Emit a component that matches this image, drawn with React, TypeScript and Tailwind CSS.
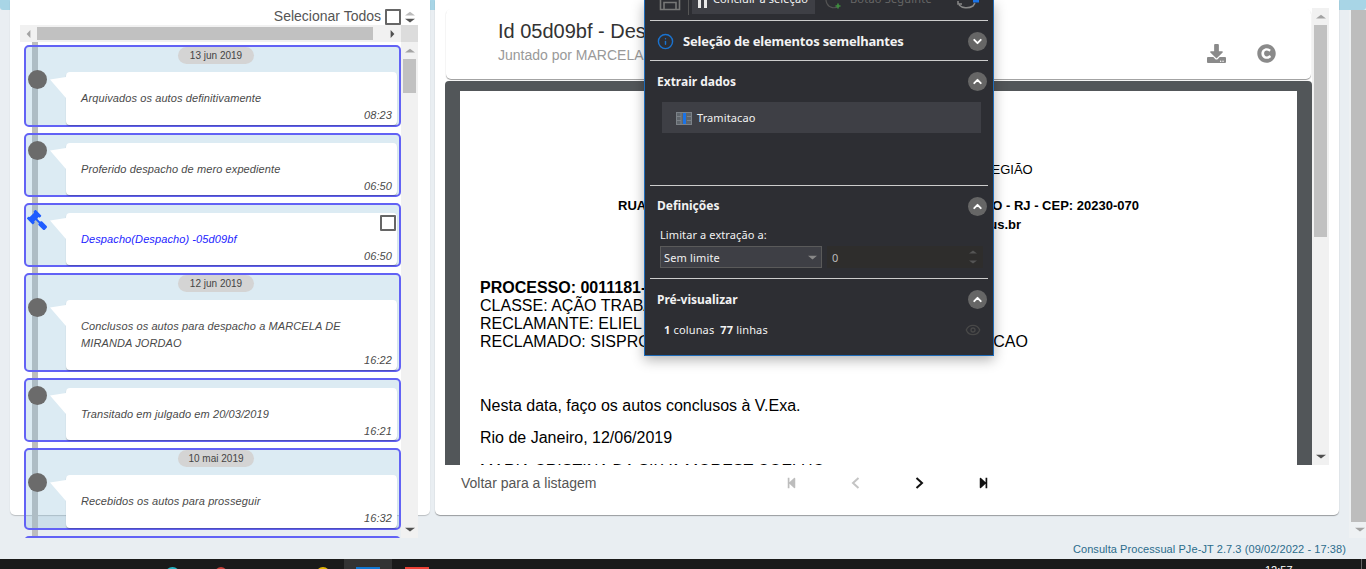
import { ChevronDown, ChevronUp, Eye, Info } from 'lucide-react'
import { FaCopyright, FaDownload, FaGavel, FaStepBackward, FaStepForward } from 'react-icons/fa'

const SANS = "font-['Liberation_Sans',Arial,sans-serif]"

type Movement = {
  date?: string
  text: string
  time: string
  doc?: boolean
}

const MOVEMENTS: Movement[] = [
  { date: '13 jun 2019', text: 'Arquivados os autos definitivamente', time: '08:23' },
  { text: 'Proferido despacho de mero expediente', time: '06:50' },
  { text: 'Despacho(Despacho) -05d09bf', time: '06:50', doc: true },
  { date: '12 jun 2019', text: 'Conclusos os autos para despacho a MARCELA DE MIRANDA JORDAO', time: '16:22' },
  { text: 'Transitado em julgado em 20/03/2019', time: '16:21' },
  { date: '10 mai 2019', text: 'Recebidos os autos para prosseguir', time: '16:32' },
]

function Triangle({ dir, className }: { dir: 'up' | 'down' | 'left' | 'right'; className: string }) {
  const points = {
    up: '0,7 5,1 10,7',
    down: '0,1 5,7 10,1',
    left: '7,0 1,5 7,10',
    right: '1,0 7,5 1,10',
  }[dir]
  return (
    <svg
      viewBox={dir === 'up' || dir === 'down' ? '0 0 10 8' : '0 0 8 10'}
      preserveAspectRatio="none"
      className={className}
    >
      <polygon points={points} fill="currentColor" />
    </svg>
  )
}

function MovementCard({ item }: { item: Movement }) {
  return (
    <div className="relative rounded-[5px] border-2 border-[#6262f5] bg-[rgba(138,188,215,0.3)]">
      {item.date ? (
        <div className="flex h-[25px] justify-center pl-[7px]">
          <span className="h-[17px] w-[76px] rounded-full bg-[#d4d4d4] text-center text-[10px] leading-[17px] text-[#444]">
            {item.date}
          </span>
        </div>
      ) : (
        <div className="h-[8px]" />
      )}
      <div
        className={`relative ml-[40px] mr-[2px] rounded-[4px] bg-white pt-[18px] pl-[15px] pr-[5px] shadow-[0_1px_1px_rgba(0,0,0,0.25)] ${
          item.date ? 'pb-px' : ''
        }`}
      >
        <svg viewBox="0 0 16 22" className="absolute -left-[16px] top-[5px] h-[22px] w-[16px]">
          <polygon points="0,2.5 16,0 16,21" fill="#fff" />
        </svg>
        {item.doc ? (
          <>
            <FaGavel className="absolute -left-[39px] -top-[3px] h-[20px] w-[20px] -scale-x-100 text-[#1f5cff]" />
            <span className="absolute right-[1px] top-[2px] h-[16px] w-[16px] rounded-[1px] border-2 border-[#666]" />
          </>
        ) : (
          <span className="absolute -left-[38px] -top-[2px] h-[19px] w-[19px] rounded-full bg-[#6b6b6b]" />
        )}
        <p
          className={`pr-[40px] text-[11px] italic leading-[17px] tracking-[0.1px] ${
            item.doc ? 'text-[#2323ff]' : 'text-[#4a4a4a]'
          }`}
        >
          {item.text}
        </p>
        <p className="text-right text-[11px] italic leading-[17px] tracking-[0.1px] text-[#4a4a4a]">{item.time}</p>
      </div>
    </div>
  )
}

function TimelinePanel() {
  return (
    <div className="h-[515px] w-[420px] shrink-0 rounded-b-[5px] bg-white px-[10px] shadow-[0_1px_1px_rgba(0,0,0,0.2)]">
      <div className="flex h-[25px] items-center justify-end pr-[4px] pt-[8px]">
        <span className="mr-[4px] text-[14px] text-[#555]">Selecionar Todos</span>
        <span className="h-[16px] w-[16px] rounded-[1px] border-2 border-[#666]" />
        <span className="ml-[2px] flex w-[13px] flex-col items-center gap-[2px] text-[#555]">
          <Triangle dir="up" className="h-[5px] w-[10px] text-[#bbb]" />
          <Triangle dir="down" className="h-[5px] w-[10px]" />
        </span>
      </div>
      <div className="flex h-[17px]">
        <div className="flex w-[381px] items-center bg-[#f1f1f1] text-[#a3a3a3]">
          <div className="flex w-[17px] justify-center">
            <Triangle dir="left" className="h-[8px] w-[5px]" />
          </div>
          <div className="h-[13px] w-[336px] bg-[#c1c1c1]" />
          <div className="ml-[11px] flex w-[17px] justify-center text-[#505050]">
            <Triangle dir="right" className="h-[8px] w-[5px]" />
          </div>
        </div>
        <div className="w-[17px] bg-[#dcdcdc]" />
      </div>
      <div className="flex h-[496px]">
        <div className="relative flex w-[381px] flex-col gap-[6px] overflow-hidden pl-[4px] pt-[3px]">
          <div className="absolute bottom-0 left-[12px] top-0 w-[6px] bg-[#bdbdbd]" />
          {MOVEMENTS.map((item) => (
            <MovementCard key={item.text} item={item} />
          ))}
          <div className="relative h-[20px] shrink-0 rounded-[5px] border-2 border-[#6262f5] bg-[rgba(138,188,215,0.3)]" />
        </div>
        <div className="flex w-[17px] flex-col items-center bg-[#f1f1f1] text-[#a3a3a3]">
          <Triangle dir="up" className="mt-[6px] h-[5px] w-[10px]" />
          <div className="mt-[6px] h-[34px] w-[13px] bg-[#c1c1c1]" />
          <Triangle dir="down" className="mt-auto mb-[6px] h-[5px] w-[10px] text-[#505050]" />
        </div>
      </div>
    </div>
  )
}

function DocumentPage() {
  return (
    <div className="mx-[15px] mt-[10px] h-[400px] bg-white pl-[20px] text-black">
      <div className="pt-[70px] text-center text-[13px] leading-[18px]">
        <p className="pr-[20px]">TRIBUNAL REGIONAL DO TRABALHO - 1ª REGIÃO</p>
        <p className="h-[18px]" />
        <p className="pr-[20px] font-bold">RUA DO LAVRADIO, 132 - SL. 90 - CENTRO - RIO DE JANEIRO - RJ - CEP: 20230-070</p>
        <p className="mt-px pr-[20px] font-bold">e-mail: consultaprocessual.varas1@trt1.jus.br</p>
      </div>
      <div className="mt-[45px] text-[16px] leading-[18px]">
        <p className="font-bold">PROCESSO: 0011181-22.2018.5.01.0000</p>
        <p>CLASSE: AÇÃO TRABALHISTA - RITO ORDINÁRIO</p>
        <p>RECLAMANTE: ELIEL DE SOUZA</p>
        <p>RECLAMADO: SISPRO - SERVICOS DE INFORMATICA E COMUNICACAO</p>
      </div>
      <p className="mt-[46px] text-[16px] leading-[18px]">Nesta data, faço os autos conclusos à V.Exa.</p>
      <p className="mt-[14px] text-[16px] leading-[18px]">Rio de Janeiro, 12/06/2019</p>
      <p className="mt-[15px] text-[16px] leading-[18px]">MARIA CRISTINA DA SILVA MOREST COELHO</p>
    </div>
  )
}

function PagerChevron({ dir, className }: { dir: 'left' | 'right'; className: string }) {
  return (
    <svg viewBox="0 0 9 12" className={`h-[12px] w-[9px] ${className}`}>
      <polyline
        points={dir === 'left' ? '7.5,1 2,6 7.5,11' : '1.5,1 7,6 1.5,11'}
        fill="none"
        stroke="currentColor"
        strokeWidth="2"
      />
    </svg>
  )
}

function DetailPanel() {
  return (
    <div className="h-[515px] w-[904px] shrink-0 rounded-b-[5px] bg-white shadow-[0_1px_1px_rgba(0,0,0,0.35)]">
      <div className="ml-[10px] flex h-[465px] w-[884px] pt-[8px]">
        <div className="flex w-[867px] flex-col">
          <div className="mx-px mt-px flex h-[70px] shrink-0 items-center rounded-[5px] bg-white pl-[52px] pr-[35px] shadow-[0_1px_1px_rgba(0,0,0,0.4)]">
            <div className="flex-1 self-start pt-[8px]">
              <h1 className="text-[20px] leading-[28px] text-[#333]">Id 05d09bf - Despacho (Despacho)</h1>
              <p className="text-[14px] leading-[20px] text-[#999]">Juntado por MARCELA DE MIRANDA JORDAO</p>
            </div>
            <FaDownload className="mt-[18px] h-[19px] w-[19px] text-[#8a8a8a]" />
            <FaCopyright className="ml-[31px] mt-[18px] h-[19px] w-[19px] text-[#8a8a8a]" />
          </div>
          <div className="mt-[2px] h-[384px] overflow-hidden rounded-t-[4px] bg-[#525659]">
            <DocumentPage />
          </div>
        </div>
        <div className="flex w-[17px] flex-col items-center bg-[#f1f1f1] text-[#a3a3a3]">
          <Triangle dir="up" className="mt-[6px] h-[5px] w-[10px]" />
          <div className="mt-[6px] h-[212px] w-[13px] bg-[#c1c1c1]" />
          <Triangle dir="down" className="mt-auto mb-[6px] h-[5px] w-[10px] text-[#505050]" />
        </div>
      </div>
      <div className="flex h-[36px] items-center pl-[26px]">
        <span className="w-[298px] text-[14px] text-[#555]">Voltar para a listagem</span>
        <span className="flex w-[64px] justify-center text-[#bdbdbd]">
          <FaStepBackward className="h-[12px] w-[11px]" />
        </span>
        <span className="flex w-[64px] justify-center text-[#c4c4c4]">
          <PagerChevron dir="left" className="" />
        </span>
        <span className="flex w-[64px] justify-center text-[#111]">
          <PagerChevron dir="right" className="" />
        </span>
        <span className="flex w-[64px] justify-center text-[#111]">
          <FaStepForward className="h-[12px] w-[11px]" />
        </span>
      </div>
    </div>
  )
}

function SectionToggle({ open }: { open: boolean }) {
  return (
    <span className="flex h-[19px] w-[19px] items-center justify-center rounded-full bg-[#666] text-white">
      {open ? <ChevronUp size={13} strokeWidth={3.5} /> : <ChevronDown size={13} strokeWidth={3.5} />}
    </span>
  )
}

function ExtractionPanel() {
  return (
    <div className="absolute left-[644px] top-0 h-[356px] w-[350px] overflow-hidden border-x border-b border-[#1e6bb8] bg-[#2d2e33] font-['Noto_Sans',sans-serif] text-[#f2f2f2] shadow-[0_4px_12px_rgba(0,0,0,0.3)]">
      <div className="flex h-[20px] items-start overflow-hidden">
        <svg viewBox="0 0 22 20" className="ml-[14px] mt-[-9px] h-[20px] w-[22px] shrink-0">
          <path d="M1.5 1.5h16l3 3v14h-19z M5 18.5v-7h12v7" fill="none" stroke="#777" strokeWidth="1.6" />
        </svg>
        <span className="ml-[7px] h-[15px] w-px bg-[#555]" />
        <div className="ml-[3px] flex h-[14px] w-[123px] items-start overflow-hidden bg-[#3e3f45] pl-[6px]">
          <span className="mr-[6px] flex h-[8px] gap-[3px]">
            <span className="w-[3px] bg-[#e8e8e8]" />
            <span className="w-[3px] bg-[#e8e8e8]" />
          </span>
          <span className="mt-[-8px] whitespace-nowrap text-[11px] leading-[14px] tracking-[0.1px]">
            Concluir a seleção
          </span>
        </div>
        <svg viewBox="0 0 20 18" className="ml-[10px] mt-[-9px] h-[18px] w-[20px] shrink-0">
          <path d="M14 15a8 8 0 1 1 3-7" fill="none" stroke="#555" strokeWidth="1.2" />
          <path d="M13 12.5v5M10.5 15h5" stroke="#3f8f3f" strokeWidth="1.6" />
        </svg>
        <span className="ml-[5px] mt-[-8px] whitespace-nowrap text-[11px] leading-[14px] tracking-[0.2px] text-[#666]">
          Botão Seguinte
        </span>
        <svg viewBox="0 0 23 10" className="ml-[25px] mt-0 h-[10px] w-[23px] shrink-0">
          <path d="M1 1v3h4M2 5c3 3 9 4 14 1l2-3" fill="none" stroke="#888" strokeWidth="1.5" />
          <rect x="16" width="6" height="2.5" fill="#1a73e8" />
        </svg>
      </div>
      <div className="mx-[5px] h-px bg-[#ccc]" />
      <div className="flex h-[39px] items-center pl-[12px] pr-[6px] pt-px">
        <Info className="h-[17px] w-[17px] text-[#1a73d0]" />
        <span className="ml-[9px] flex-1 pt-px text-[13px] font-bold tracking-[-0.2px]">
          Seleção de elementos semelhantes
        </span>
        <SectionToggle open={false} />
      </div>
      <div className="mx-[5px] h-px bg-[#ccc]" />
      <div className="flex h-[40px] items-center pl-[12px] pr-[6px] pt-px">
        <span className="flex-1 text-[12px] font-bold">Extrair dados</span>
        <SectionToggle open />
      </div>
      <div className="ml-[17px] mt-px flex h-[31px] w-[319px] items-center bg-[#3e3f45] pl-[14px] pt-px">
        <svg viewBox="0 0 16 13" className="h-[13px] w-[16px]">
          <rect x="0.5" y="0.5" width="15" height="12" fill="#5f656b" stroke="#7c8288" />
          <rect x="7" y="1" width="3" height="11" fill="#1a73e8" />
          <path d="M5 1v11M1 4.5h4M1 8.5h4M11 4.5h4M11 8.5h4" stroke="#7c8288" strokeWidth="1" />
        </svg>
        <span className="ml-[5px] text-[11px] tracking-[0.1px]">Tramitacao</span>
      </div>
      <div className="mx-[5px] mt-[52px] h-px bg-[#ccc]" />
      <div className="flex h-[40px] items-center pl-[12px] pr-[6px]">
        <span className="flex-1 text-[12px] font-bold">Definições</span>
        <SectionToggle open />
      </div>
      <p className="pl-[15px] text-[11px] leading-[17px] tracking-[0.1px]">Limitar a extração a:</p>
      <div className="ml-[15px] mt-[3px] flex h-[22px]">
        <div className="flex w-[162px] items-center justify-between border border-[#5a5a5a] bg-[#3e3f45] pl-[3px] pr-[4px] text-[11px] tracking-[0.15px]">
          <span className="pt-[2px]">Sem limite</span>
          <Triangle dir="down" className="h-[5px] w-[9px] text-[#888]" />
        </div>
        <div className="ml-[5px] flex w-[156px] items-center justify-between bg-[#2e2d2c] pl-[5px] pr-[6px] text-[11px] text-[#bbb]">
          <span className="pt-[2px]">0</span>
          <span className="flex flex-col gap-[6px] text-[#555]">
            <Triangle dir="up" className="h-[4px] w-[8px]" />
            <Triangle dir="down" className="h-[4px] w-[8px]" />
          </span>
        </div>
      </div>
      <div className="mx-[5px] mt-[10px] h-px bg-[#ccc]" />
      <div className="flex h-[40px] items-center pl-[12px] pr-[6px] pt-px">
        <span className="flex-1 text-[12px] font-bold">Pré-visualizar</span>
        <SectionToggle open />
      </div>
      <div className="flex items-center pl-[19px] pr-[12px] pt-[3px] text-[11px] tracking-[0.15px]">
        <span className="flex-1">
          <b>1</b> colunas&nbsp; <b>77</b> linhas
        </span>
        <Eye className="h-[16px] w-[16px] text-[#484848]" />
      </div>
    </div>
  )
}

function Taskbar() {
  return (
    <div className="relative flex h-[10px] shrink-0 items-start overflow-hidden bg-[#1a1a1a] pl-[165px] pt-[8px]">
      <span className="h-[15px] w-[15px] rounded-full bg-[#28b5c4]" />
      <span className="ml-[35px] h-[12px] w-[12px] rounded-full bg-[#c8423a]" />
      <span className="ml-[89px] h-[14px] w-[14px] rounded-full bg-[#e3b505]" />
      <div className="ml-[14px] -mt-[8px] flex h-[10px] w-[48px] justify-center bg-[#333] pt-[8px]">
        <span className="h-[14px] w-[24px] bg-[#1178d4]" />
      </div>
      <span className="ml-[13px] h-[14px] w-[24px] bg-[#ef4136]" />
      <span className="absolute left-[1265px] top-[4px] text-[11px] leading-[14px] text-white">12:57</span>
      <span className="absolute bottom-0 left-[1361px] top-0 w-px bg-[#666]" />
    </div>
  )
}

export default function App() {
  return (
    <div className={`relative flex h-[569px] w-[1366px] flex-col overflow-hidden bg-[#e9eef2] ${SANS}`}>
      <div className="absolute left-0 right-0 top-0 h-[10px] rounded-b-[3px] bg-[#a8d5e6]" />
      <div className="relative flex min-h-0 flex-1">
        <div className="flex w-[1349px] flex-col">
          <div className="flex gap-[5px] pl-[10px]">
            <TimelinePanel />
            <DetailPanel />
          </div>
          <p className="mt-[27px] pr-[3px] text-right text-[11px] leading-[14px] tracking-[0.08px] text-[#2b6c8c]">
            Consulta Processual PJe-JT 2.7.3 (09/02/2022 - 17:38)
          </p>
        </div>
        <div className="mt-[10px] flex h-[528px] w-[17px] flex-col items-end bg-[#eef1f3]">
          <div className="h-[512px] w-[15px] bg-[#bdbdbd]" />
          <Triangle dir="down" className="mr-[1px] mt-[5px] h-[5px] w-[10px] text-[#a3a3a3]" />
        </div>
      </div>
      <ExtractionPanel />
      <Taskbar />
    </div>
  )
}
